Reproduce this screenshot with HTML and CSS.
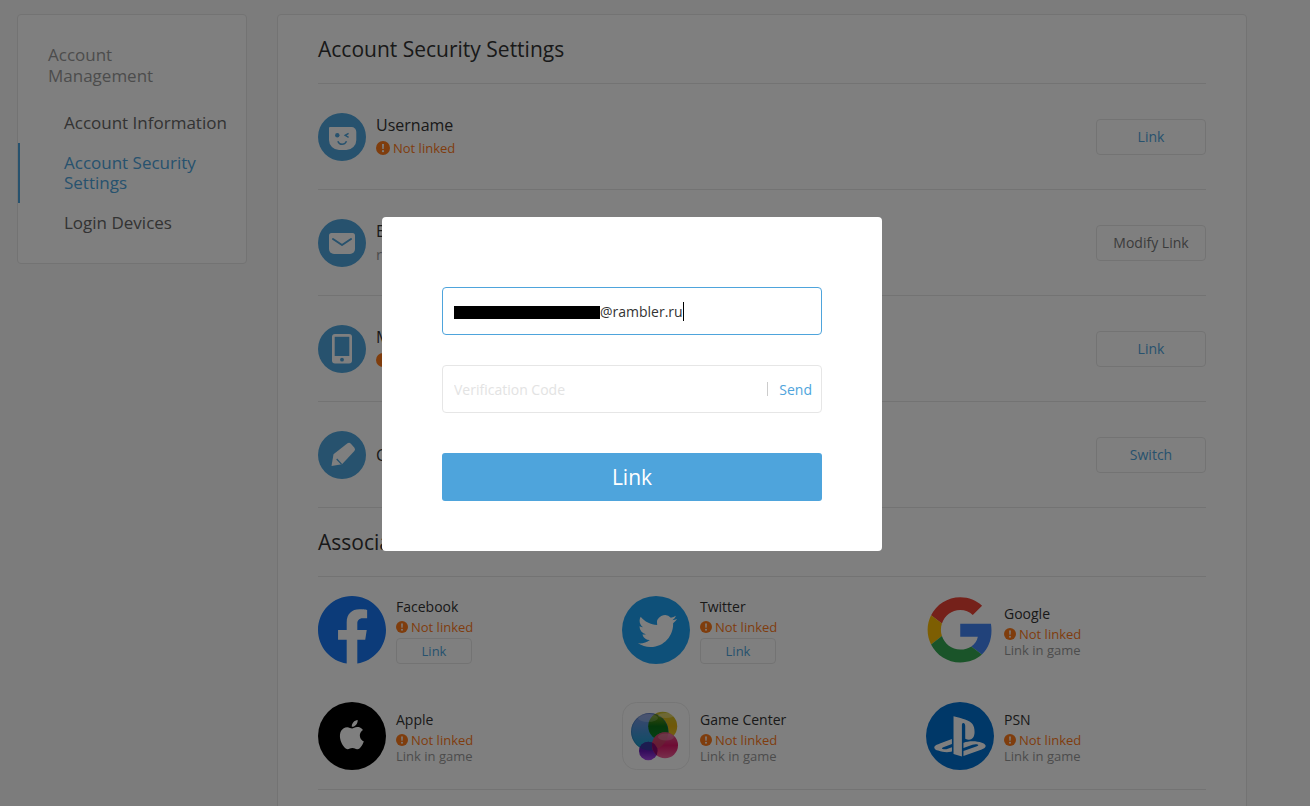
FILE: index.html
```html
<!DOCTYPE html>
<html lang="en">
<head>
<meta charset="utf-8">
<meta name="viewport" content="width=device-width, initial-scale=1">
<title>Account Security Settings</title>
<link rel="stylesheet" href="styles.css">
</head>
<body>
<svg class="defs" aria-hidden="true">
  <symbol id="warn" viewBox="0 0 14 14">
    <circle cx="7" cy="7" r="7" fill="#ff7a1a"/>
    <path d="M6 3h2l-.3 5H6.300z" fill="#fff"/>
    <circle cx="7" cy="10.200" r="1.100" fill="#fff"/>
  </symbol>
</svg>

<div class="page">
  <nav class="sidebar" aria-label="Account">
    <h2 class="sidebar-title">Account Management</h2>
    <a class="nav-item" href="#info">Account Information</a>
    <a class="nav-item active" href="#security" aria-current="page">Account Security Settings</a>
    <a class="nav-item" href="#devices">Login Devices</a>
  </nav>

  <main class="panel">
    <h1 class="section-title">Account Security Settings</h1>

    <section class="row">
      <svg class="row-icon" viewBox="0 0 48 48" aria-hidden="true">
        <circle cx="24" cy="24" r="24" fill="#4ea4dc"/>
        <path d="M12 14h21.500a4.800 4.800 0 0 1 4.800 4.800V27a10 10 0 0 1-10 10H21a10 10 0 0 1-10-10V15a1 1 0 0 1 1-1z" fill="#fff"/>
        <circle cx="19.300" cy="22.300" r="2.200" fill="#4ea4dc"/>
        <path d="M30.600 20.300l-3.400 2 3.400 2M19.800 28.200c1.800 4.200 6.700 4.200 8.700 0" fill="none" stroke="#4ea4dc" stroke-width="1.500"/>
      </svg>
      <div class="row-text">
        <h3 class="row-name">Username</h3>
        <p class="status"><svg class="warn" aria-hidden="true"><use href="#warn"/></svg>Not linked</p>
      </div>
      <button class="btn" type="button">Link</button>
    </section>

    <section class="row">
      <svg class="row-icon" viewBox="0 0 48 48" aria-hidden="true">
        <circle cx="24" cy="24" r="24" fill="#4ea4dc"/>
        <path d="M13.500 14h21a2.500 2.500 0 0 1 2.500 2.500V30a5 5 0 0 1-5 5H16a5 5 0 0 1-5-5V16.500a2.500 2.500 0 0 1 2.500-2.500z" fill="#fff"/>
        <path d="M15 20l9 6 9-6" fill="none" stroke="#4ea4dc" stroke-width="2" stroke-linecap="round" stroke-linejoin="round"/>
      </svg>
      <div class="row-text">
        <h3 class="row-name">Email</h3>
        <p class="row-value">r***@rambler.ru</p>
      </div>
      <button class="btn btn-plain" type="button">Modify Link</button>
    </section>

    <section class="row">
      <svg class="row-icon" viewBox="0 0 48 48" aria-hidden="true">
        <circle cx="24" cy="24" r="24" fill="#4ea4dc"/>
        <rect x="14" y="9" width="20" height="29.500" rx="3" fill="#fff"/>
        <rect x="16.700" y="11.800" width="14.600" height="19.200" fill="#4ea4dc"/>
        <circle cx="24" cy="34.700" r="1.900" fill="#4ea4dc"/>
      </svg>
      <div class="row-text">
        <h3 class="row-name">Mobile</h3>
        <p class="status"><svg class="warn" aria-hidden="true"><use href="#warn"/></svg>Not linked</p>
      </div>
      <button class="btn" type="button">Link</button>
    </section>

    <section class="row">
      <svg class="row-icon" viewBox="0 0 48 48" aria-hidden="true">
        <circle cx="24" cy="24" r="24" fill="#4ea4dc"/>
        <path d="M13.500 35l2-11.800 14-10.900q1.800-1.200 3.400.4l3.500 4q1.300 1.700 0 3.400L24 33.200z" fill="#fff"/>
        <path d="M18.700 28l5 5.400" fill="none" stroke="#4ea4dc" stroke-width="1.300"/>
      </svg>
      <div class="row-text">
        <h3 class="row-name">Change Password</h3>
      </div>
      <button class="btn" type="button">Switch</button>
    </section>

    <h2 class="section-title">Associated Accounts</h2>

    <ul class="accounts">
      <li class="account">
        <svg class="logo" viewBox="0 0 24 24" aria-hidden="true">
          <circle cx="12" cy="12" r="11.900" fill="#fff"/>
          <path transform="translate(0 -.073)" fill="#1877f2" d="M24 12.073c0-6.627-5.373-12-12-12s-12 5.373-12 12c0 5.990 4.388 10.954 10.125 11.854v-8.385H7.078v-3.470h3.047V9.430c0-3.007 1.792-4.669 4.533-4.669 1.312 0 2.686.235 2.686.235v2.953H15.830c-1.491 0-1.956.925-1.956 1.874v2.250h3.328l-.532 3.470h-2.796v8.385C19.612 23.027 24 18.062 24 12.073z"/>
        </svg>
        <div class="account-text">
          <h3 class="account-name">Facebook</h3>
          <p class="status small"><svg class="warn" aria-hidden="true"><use href="#warn"/></svg>Not linked</p>
          <button class="btn btn-small" type="button">Link</button>
        </div>
      </li>
      <li class="account">
        <svg class="logo" viewBox="0 0 68 68" aria-hidden="true">
          <circle cx="34" cy="34" r="34" fill="#1da1f2"/>
          <path transform="translate(16 15.500) scale(1.630)" fill="#fff" d="M23.953 4.570a10 10 0 01-2.825.775 4.958 4.958 0 002.163-2.723c-.951.555-2.005.959-3.127 1.184a4.920 4.920 0 00-8.384 4.482C7.690 8.095 4.067 6.130 1.640 3.162a4.822 4.822 0 00-.666 2.475c0 1.710.870 3.213 2.188 4.096a4.904 4.904 0 01-2.228-.616v.060a4.923 4.923 0 003.946 4.827 4.996 4.996 0 01-2.212.085 4.936 4.936 0 004.604 3.417 9.867 9.867 0 01-6.102 2.105c-.390 0-.779-.023-1.170-.067a13.995 13.995 0 007.557 2.209c9.053 0 13.998-7.496 13.998-13.985 0-.210 0-.420-.015-.630A9.935 9.935 0 0024 4.590z"/>
        </svg>
        <div class="account-text">
          <h3 class="account-name">Twitter</h3>
          <p class="status small"><svg class="warn" aria-hidden="true"><use href="#warn"/></svg>Not linked</p>
          <button class="btn btn-small" type="button">Link</button>
        </div>
      </li>
      <li class="account">
        <svg class="logo" viewBox="0 0 68 68" aria-hidden="true">
          <g transform="translate(1.600 1.200) scale(1.360)">
            <path fill="#ea4335" d="M24 9.500c3.540 0 6.710 1.220 9.210 3.600l6.850-6.850C35.900 2.380 30.470 0 24 0 14.620 0 6.510 5.380 2.560 13.220l7.980 6.190C12.430 13.720 17.740 9.500 24 9.500z"/>
            <path fill="#4285f4" d="M46.980 24.550c0-1.570-.150-3.090-.380-4.950H24v9.400h12.940c-.580 2.960-2.260 5.480-4.780 7.180l7.730 6c4.510-4.180 7.090-10.360 7.090-17.630z"/>
            <path fill="#fbbc05" d="M10.530 28.590c-.480-1.450-.760-2.990-.760-4.590s.270-3.140.760-4.590l-7.980-6.190C.920 16.460 0 20.120 0 24c0 3.880.920 7.540 2.560 10.780z"/>
            <path fill="#34a853" d="M24 48c6.480 0 11.930-2.130 15.890-5.810l-7.730-6c-2.150 1.450-4.920 2.300-8.160 2.300-6.260 0-11.570-4.220-13.470-9.910l-7.980 6.190C6.510 42.620 14.620 48 24 48z"/>
          </g>
        </svg>
        <div class="account-text">
          <h3 class="account-name">Google</h3>
          <p class="status small"><svg class="warn" aria-hidden="true"><use href="#warn"/></svg>Not linked</p>
          <p class="hint">Link in game</p>
        </div>
      </li>
      <li class="account">
        <svg class="logo" viewBox="0 0 68 68" aria-hidden="true">
          <circle cx="34" cy="34" r="34" fill="#000"/>
          <path transform="translate(19.200 18) scale(1.220)" fill="#fff" d="M12.152 6.896c-.948 0-2.415-1.078-3.960-1.040-2.040.027-3.910 1.183-4.961 3.014-2.117 3.675-.546 9.103 1.519 12.090 1.013 1.454 2.208 3.090 3.792 3.039 1.520-.065 2.090-.987 3.935-.987 1.831 0 2.350.987 3.960.948 1.637-.026 2.676-1.480 3.676-2.948 1.156-1.688 1.636-3.325 1.662-3.415-.039-.013-3.182-1.221-3.220-4.857-.026-3.040 2.480-4.494 2.597-4.559-1.429-2.090-3.623-2.324-4.390-2.376-2-.156-3.675 1.090-4.610 1.090zM15.530 3.830c.843-1.012 1.400-2.427 1.245-3.830-1.207.052-2.662.805-3.532 1.818-.780.896-1.454 2.338-1.273 3.714 1.338.104 2.715-.688 3.559-1.701"/>
        </svg>
        <div class="account-text">
          <h3 class="account-name">Apple</h3>
          <p class="status small"><svg class="warn" aria-hidden="true"><use href="#warn"/></svg>Not linked</p>
          <p class="hint">Link in game</p>
        </div>
      </li>
      <li class="account">
        <svg class="logo" viewBox="0 0 68 68" aria-hidden="true">
          <defs>
            <linearGradient id="gcBlue" x1="0" y1="0" x2="0" y2="1"><stop offset="0" stop-color="#7f8fd8"/><stop offset=".45" stop-color="#4c93d8"/><stop offset="1" stop-color="#10a0c8"/></linearGradient>
            <linearGradient id="gcYellow" x1="0" y1="0" x2="0" y2="1"><stop offset="0" stop-color="#c8c030"/><stop offset=".5" stop-color="#e0b010"/><stop offset="1" stop-color="#e8c838"/></linearGradient>
            <linearGradient id="gcGreen" x1="0" y1="0" x2="0" y2="1"><stop offset="0" stop-color="#8c9c10"/><stop offset=".5" stop-color="#0c7018"/><stop offset="1" stop-color="#0c8428"/></linearGradient>
            <linearGradient id="gcPink" x1="0" y1="0" x2="0" y2="1"><stop offset="0" stop-color="#e06090"/><stop offset=".5" stop-color="#dc1868"/><stop offset="1" stop-color="#f06098"/></linearGradient>
            <linearGradient id="gcPurple" x1="0" y1="0" x2="0" y2="1"><stop offset="0" stop-color="#5030b0"/><stop offset=".5" stop-color="#6818b8"/><stop offset="1" stop-color="#a848e8"/></linearGradient>
            <clipPath id="inBlue"><circle cx="27.700" cy="29.700" r="18.700"/></clipPath>
            <clipPath id="inPink"><circle cx="43" cy="43.300" r="13"/></clipPath>
          </defs>
          <rect x=".5" y=".5" width="67" height="67" rx="14" fill="#fff" stroke="#ececec"/>
          <circle cx="40.700" cy="24.300" r="14.500" fill="url(#gcYellow)"/>
          <circle cx="27.700" cy="29.700" r="18.700" fill="url(#gcBlue)"/>
          <g clip-path="url(#inBlue)">
            <circle cx="40.700" cy="24.300" r="14.500" fill="url(#gcGreen)"/>
          </g>
          <circle cx="27.700" cy="29.700" r="18.200" fill="none" stroke="#205890" stroke-opacity=".3"/>
          <circle cx="26.300" cy="49" r="9.300" fill="url(#gcPurple)"/>
          <g clip-path="url(#inBlue)"><circle cx="26.300" cy="49" r="9.300" fill="#3838a0"/></g>
          <circle cx="43" cy="43.300" r="13" fill="url(#gcPink)"/>
          <g clip-path="url(#inPink)">
            <circle cx="27.700" cy="29.700" r="18.700" fill="#c84868" opacity=".7"/>
            <circle cx="26.300" cy="49" r="9.300" fill="#880870"/>
          </g>
          <ellipse cx="26" cy="16" rx="10" ry="4" fill="#fff" opacity=".2"/>
          <ellipse cx="44" cy="13.500" rx="8" ry="2.500" fill="#fff" opacity=".3"/>
          <ellipse cx="44" cy="35" rx="8" ry="3.500" fill="#fff" opacity=".2"/>
        </svg>
        <div class="account-text">
          <h3 class="account-name">Game Center</h3>
          <p class="status small"><svg class="warn" aria-hidden="true"><use href="#warn"/></svg>Not linked</p>
          <p class="hint">Link in game</p>
        </div>
      </li>
      <li class="account">
        <svg class="logo" viewBox="0 0 68 68" aria-hidden="true">
          <circle cx="34" cy="34" r="34" fill="#0070d1"/>
          <path transform="translate(8.300 8.800) scale(2.140)" fill="#fff" d="M8.984 2.596v17.547l3.915 1.261V6.688c0-.690.304-1.151.794-.991.636.180.760.814.760 1.505v5.875c2.441 1.193 4.362-.002 4.362-3.152 0-3.237-1.126-4.675-4.438-5.827-1.307-.448-3.728-1.186-5.390-1.502zm4.656 16.241l6.296-2.275c.715-.258.826-.625.246-.818-.586-.192-1.637-.139-2.357.123l-4.205 1.500V14.980l.240-.085s1.201-.420 2.913-.615c1.696-.180 3.785.030 5.437.661 1.848.601 2.040 1.472 1.576 2.072-.465.600-1.622 1.036-1.622 1.036l-8.544 3.107zM1.807 18.600c-1.900-.545-2.214-1.668-1.352-2.320.801-.586 2.160-1.052 2.160-1.052l5.615-2.013v2.313L4.205 17c-.705.271-.825.632-.239.826.586.195 1.637.150 2.343-.120L8.247 17v2.074c-.120.030-.256.044-.390.073-1.939.331-3.996.196-6.050-.547z"/>
        </svg>
        <div class="account-text">
          <h3 class="account-name">PSN</h3>
          <p class="status small"><svg class="warn" aria-hidden="true"><use href="#warn"/></svg>Not linked</p>
          <p class="hint">Link in game</p>
        </div>
      </li>
    </ul>
  </main>
</div>

<div class="overlay">
  <form class="dialog" role="dialog" aria-modal="true" aria-label="Link email">
    <div class="field focused">
      <span class="redacted"></span>
      <input class="input email" type="text" aria-label="Email" value="@rambler.ru">
      <span class="caret"></span>
    </div>
    <div class="field">
      <input class="input code" type="text" aria-label="Verification Code" placeholder="Verification Code">
      <button class="send" type="button">Send</button>
    </div>
    <button class="submit" type="submit">Link</button>
  </form>
</div>
</body>
</html>
```
FILE: styles.css
```css
:root {
  --blue: #4ea4dc;
  --orange: #ff7a1a;
  --line: #e6e6e6;
  --text: #333;
}

* {
  box-sizing: border-box;
}

body {
  margin: 0;
  min-height: 100vh;
  overflow: hidden;
  background: #f8f8f8;
  color: var(--text);
  font-family: "Open Sans", "Noto Sans", sans-serif;
  font-size: 14px;
}

h1, h2, h3, p, ul {
  margin: 0;
  padding: 0;
  font-weight: 400;
}

button, input {
  font: inherit;
}

.defs {
  display: none;
}

.page {
  display: flex;
  align-items: flex-start;
  gap: 30px;
  padding: 14px 63px 0 17px;
}

.sidebar {
  flex: 0 0 230px;
  padding: 29px 0 20px;
  background: #fff;
  border: 1px solid var(--line);
  border-radius: 4px;
}

.sidebar-title {
  padding: 0 60px 0 30px;
  margin-bottom: 17px;
  color: #999;
  font-size: 17px;
  line-height: 21px;
}

.nav-item {
  display: block;
  padding: 10px 16px 10px 44px;
  border-left: 2px solid transparent;
  color: #666;
  font-size: 17px;
  line-height: 20px;
  text-decoration: none;
}

.nav-item.active {
  border-left-color: var(--blue);
  color: var(--blue);
}

.panel {
  flex: 1;
  min-height: 100vh;
  padding: 0 40px;
  background: #fff;
  border: 1px solid var(--line);
  border-radius: 4px;
}

.section-title {
  padding: 18px 0;
  border-bottom: 1px solid var(--line);
  font-size: 21px;
  line-height: 32px;
}

.row {
  display: flex;
  align-items: center;
  gap: 10px;
  min-height: 106px;
  border-bottom: 1px solid var(--line);
}

.row-icon {
  flex: none;
  width: 48px;
  height: 48px;
}

.row-text {
  flex: 1;
}

.row-name {
  font-size: 16px;
  line-height: 22px;
}

.row-value {
  color: #999;
  font-size: 15px;
  line-height: 24px;
}

.status {
  display: flex;
  align-items: center;
  gap: 3px;
  color: var(--orange);
  font-size: 13px;
  line-height: 24px;
}

.warn {
  width: 14px;
  height: 14px;
}

.btn {
  width: 110px;
  height: 36px;
  padding: 0;
  background: transparent;
  border: 1px solid var(--line);
  border-radius: 4px;
  color: var(--blue);
  font-size: 14px;
}

.btn-plain {
  color: #777;
}

.accounts {
  display: grid;
  grid-template-columns: repeat(3, 1fr);
  gap: 38px 24px;
  padding: 19px 0;
  border-bottom: 1px solid var(--line);
  list-style: none;
}

.account {
  display: flex;
  align-items: center;
  gap: 10px;
}

.logo {
  flex: none;
  width: 68px;
  height: 68px;
}

.account-name {
  font-size: 14px;
  line-height: 20px;
}

.small {
  line-height: 20px;
}

.small .warn {
  width: 12px;
  height: 12px;
}

.hint {
  color: #999;
  font-size: 13px;
  line-height: 12px;
}

.btn-small {
  display: block;
  width: 76px;
  height: 26px;
  margin-top: 1px;
  font-size: 13px;
}

.overlay {
  position: fixed;
  inset: 0;
  display: flex;
  align-items: center;
  justify-content: center;
  padding: 0 46px 38px 0;
  background: rgba(0, 0, 0, 0.5);
}

.dialog {
  display: flex;
  flex-direction: column;
  width: 500px;
  padding: 70px 60px 50px;
  background: #fff;
  border-radius: 4px;
}

.field {
  display: flex;
  align-items: center;
  height: 48px;
  margin-bottom: 30px;
  padding: 0 9px 0 11px;
  border: 1px solid var(--line);
  border-radius: 4px;
}

.focused {
  border-color: var(--blue);
}

.redacted {
  width: 146px;
  height: 13px;
  margin-top: 2px;
  background: #000;
}

.input {
  padding: 0;
  border: 0;
  outline: 0;
  background: transparent;
  color: var(--text);
  font-size: 14px;
}

.input::placeholder {
  color: #e3e3e3;
}

.email {
  field-sizing: content;
}

.caret {
  width: 1px;
  height: 19px;
  background: #000;
}

.code {
  flex: 1;
  min-width: 0;
}

.send {
  padding: 0 0 0 12px;
  background: linear-gradient(#ccc, #ccc) left center / 1px 14px no-repeat;
  border: 0;
  color: var(--blue);
  font-size: 14px;
}

.submit {
  height: 48px;
  margin-top: 10px;
  background: var(--blue);
  border: 0;
  border-radius: 3px;
  color: #fff;
  font-size: 21px;
}
```
